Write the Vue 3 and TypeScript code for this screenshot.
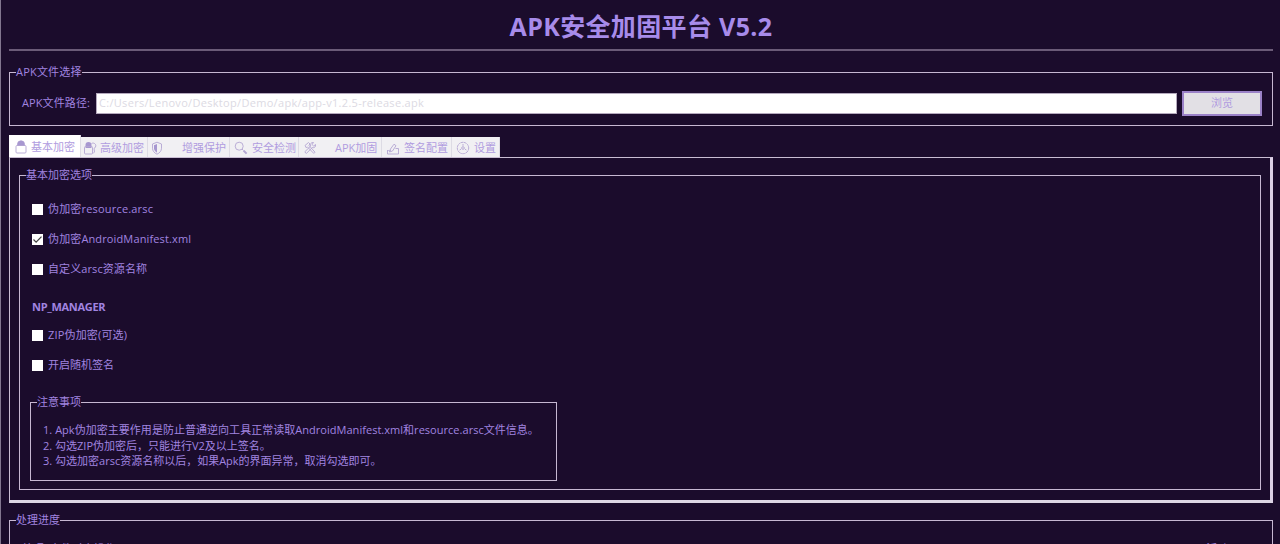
<script setup lang="ts">
import { ref } from 'vue'

interface Option {
  label: string
  checked: boolean
  width: number
}
interface Tab {
  label: string
  icon: string
  width: number
  gap: number
}

const tabs: Tab[] = [
  { label: '基本加密', icon: 'lock', width: 72, gap: 3 },
  { label: '高级加密', icon: 'keylock', width: 67, gap: 3 },
  { label: '增强保护', icon: 'shield', width: 82, gap: 17 },
  { label: '安全检测', icon: 'search', width: 69, gap: 4 },
  { label: 'APK加固', icon: 'tools', width: 83, gap: 18 },
  { label: '签名配置', icon: 'sign', width: 70, gap: 4 },
  { label: '设置', icon: 'gear', width: 48, gap: 4 },
]
const active = ref(0)
const path = ref('C:/Users/Lenovo/Desktop/Demo/apk/app-v1.2.5-release.apk')
const basic = ref<Option[]>([
  { label: '伪加密resource.arsc', checked: false, width: 105 },
  { label: '伪加密AndroidManifest.xml', checked: true, width: 143 },
  { label: '自定义arsc资源名称', checked: false, width: 99 },
])
const manager = ref<Option[]>([
  { label: 'ZIP伪加密(可选)', checked: false, width: 79 },
  { label: '开启随机签名', checked: false, width: 66 },
])
const notes = [
  '1. Apk伪加密主要作用是防止普通逆向工具正常读取AndroidManifest.xml和resource.arsc文件信息。',
  '2. 勾选ZIP伪加密后，只能进行V2及以上签名。',
  '3. 勾选加密arsc资源名称以后，如果Apk的界面异常，取消勾选即可。',
]
</script>

<template>
  <main class="window">
    <h1>APK安全加固平台 V5.2</h1>
    <section class="group file">
      <div class="legend wide">APK文件选择</div>
      <div class="file-row">
        <label for="apk">APK文件路径:</label>
        <input id="apk" v-model="path" type="text" />
        <button type="button">浏览</button>
      </div>
    </section>

    <nav class="tabs">
      <div
        v-for="(t, i) in tabs"
        :key="t.label"
        class="tab"
        :class="{ active: i === active }"
        :style="{ width: t.width + 'px' }"
        @click="active = i"
      >
        <svg viewBox="0 0 14 14" :style="{ marginRight: t.gap + 'px' }">
          <template v-if="t.icon === 'lock'">
            <path d="M3.500 5.500V4.300a3.500 3.500 0 0 1 7 0v1.200" />
            <path class="solid" d="M3.500 6V4.300a3.500 3.500 0 0 1 7 0V6z" />
            <rect x="2" y="5.500" width="10" height="7.500" rx="1" />
          </template>
          <template v-else-if="t.icon === 'keylock'">
            <path d="M8.500 2.500c2-1.200 4.500.3 4.300 2.500-.1 1.200-.8 2-1.800 2.400l.5 3.600-1.500 1.500" />
            <path class="solid" d="M2.500 7V4a3 3 0 0 1 6 0v3z" />
            <rect x="1.500" y="5.500" width="8" height="7.500" rx="1" />
          </template>
          <template v-else-if="t.icon === 'shield'">
            <path d="M7 1.200 11.500 3v4.200c0 2.700-1.800 4.800-4.500 6-2.700-1.200-4.500-3.300-4.500-6V3z" />
            <path class="solid" d="M7 3 4 4.300v3C4 9.200 5.200 10.800 7 11.700z" />
          </template>
          <template v-else-if="t.icon === 'search'">
            <circle cx="5.200" cy="5.200" r="4" />
            <path d="m8 8 1.500 1.500" />
            <path class="thick" d="m9.600 9.600 3 3" />
          </template>
          <template v-else-if="t.icon === 'tools'">
            <path d="M2 4.500 5.500 1.500 7 3 5.800 4.200l6.200 7-1.200 1.200-6.500-6.600-1 1zM12.500 3.500 10.700 5 9 3.500l1.500-2C8 1.200 7 3 7.700 5L1.800 10.800l1.500 1.700 6-6c2 .8 3.700-.8 3.200-3z" />
          </template>
          <template v-else-if="t.icon === 'sign'">
            <path d="M1.500 9v4h11V7.500H9.500M1.500 10c1.500-1.200 2 .6 3.500-.5M3.500 11l1-3L8 3.200l2 1.500L6.500 10z" />
          </template>
          <template v-else>
            <circle cx="7" cy="7" r="5.700" stroke-dasharray="2.600 .4" />
            <circle cx="7" cy="7" r="1.300" />
            <path d="M7 3v1.800M3.600 9l1.500-.9M10.400 9l-1.500-.9" />
          </template>
        </svg>
        <span>{{ t.label }}</span>
      </div>
    </nav>

    <section class="panel">
      <div class="group options">
        <div class="legend">基本加密选项</div>
        <label v-for="o in basic" :key="o.label" class="option">
          <input v-model="o.checked" type="checkbox" />
          <span class="box"><svg v-if="o.checked" viewBox="0 0 11 11"><path d="m1.500 5.500 2.600 2.600 5.400-5.500" /></svg></span>
          <svg class="line" :width="o.width + 4" height="18"><text x="0" y="13" :textLength="o.width">{{ o.label }}</text></svg>
        </label>
        <h2>NP_MANAGER</h2>
        <label v-for="o in manager" :key="o.label" class="option">
          <input v-model="o.checked" type="checkbox" />
          <span class="box"><svg v-if="o.checked" viewBox="0 0 11 11"><path d="m1.500 5.500 2.600 2.600 5.400-5.500" /></svg></span>
          <svg class="line" :width="o.width + 4" height="18"><text x="0" y="13" :textLength="o.width">{{ o.label }}</text></svg>
        </label>
        <div class="group notes">
          <div class="legend">注意事项</div>
          <p v-for="n in notes" :key="n">{{ n }}</p>
        </div>
      </div>
    </section>

    <section class="group progress">
      <div class="legend">处理进度</div>
      <div class="status"><span>处理: 文件对齐操作</span><span>活动...</span></div>
    </section>
  </main>
</template>

<style>
html,
body {
  background: #1b0c2c;
  overflow: hidden;
}
</style>

<style scoped>
* {
  box-sizing: border-box;
}
.window {
  height: 544px;
  overflow: hidden;
  padding: 0 7px 0 8px;
  border-left: 1px solid #82768f;
  background: #1b0c2c;
  color: #a184e0;
  font: 11px/16px 'Open Sans', 'Noto Sans CJK SC', sans-serif;
  white-space: nowrap;
}
h1 {
  height: 51px;
  margin: 0 0 21px;
  padding-top: 1px;
  border-bottom: 2px solid #6b5b78;
  color: #a78bea;
  font-size: 25px;
  font-weight: 700;
  line-height: 50px;
  letter-spacing: 0.35px;
  text-align: center;
}
.group {
  border: 1px solid #c6b8d2;
}
.legend {
  width: fit-content;
  height: 16px;
  margin: -9px 0 0 6px;
  background: #1b0c2c;
}
.wide {
  letter-spacing: 0.2px;
}
.file {
  height: 54px;
}
.file-row {
  display: flex;
  align-items: center;
  height: 24px;
  margin: 11px 10px 0 12px;
}
.file-row label {
  width: 74px;
  letter-spacing: 0.1px;
}
.file-row input {
  flex: 1;
  height: 21px;
  min-width: 0;
  padding: 0 2px 1px;
  border: 1px solid #b4a9bd;
  border-radius: 0;
  outline: 0;
  background: #fff;
  color: #dcdae3;
  font: inherit;
  letter-spacing: 0.31px;
}
.file-row button {
  width: 80px;
  height: 25px;
  margin-left: 5px;
  padding: 0;
  border: 2px solid #9b82c8;
  border-radius: 0;
  background: #e2e0e5;
  color: #b09be0;
  font: inherit;
}
.tabs {
  display: flex;
  align-items: flex-end;
  height: 31px;
}
.tab {
  display: flex;
  align-items: center;
  height: 20px;
  padding: 2px 0 0 3px;
  border-right: 1px solid #dddbe4;
  background: #f1f0f3;
  color: #b09ce0;
}
.tab:nth-child(2),
.tab:nth-child(3) {
  padding-left: 2px;
}
.tab:nth-child(3) span {
  margin-left: 1px;
}
.tab:nth-child(n + 4) {
  padding-left: 4px;
}
.tab.active {
  height: 22px;
  padding: 1px 0 0 5px;
  background: #fff;
}
.tab svg {
  flex: none;
  width: 14px;
  height: 14px;
  fill: none;
  stroke: #b3a5d2;
  stroke-width: 0.9;
}
.tab .solid {
  fill: #a797d0;
  stroke: none;
}
.tab .thick {
  stroke-width: 2;
}
.panel {
  height: 346px;
  padding: 17px 9px 0;
  border: 1px solid #c9bdd3;
  border-right: 3px solid #ddd1e7;
  border-bottom: 3px solid #ddd6e4;
}
.options {
  height: 315px;
  padding: 0 10px;
}
.options > .legend {
  margin-left: -4px;
}
.option {
  display: flex;
  align-items: center;
  height: 30px;
  padding-left: 2px;
}
.legend + .option {
  margin-top: 11px;
}
.option input {
  display: none;
}
.box {
  width: 11px;
  height: 11px;
  margin-right: 5px;
  background: #fff;
}
.box svg {
  display: block;
  fill: none;
  stroke: #444;
  stroke-width: 1.3;
}
.line {
  overflow: visible;
  fill: #a184e0;
}
h2 {
  height: 16px;
  margin: 15px 0 5px 2px;
  font: 700 11px/16px 'Open Sans', sans-serif;
  letter-spacing: -0.3px;
}
.notes {
  width: 527px;
  height: 79px;
  margin-top: 22px;
}
.notes .legend + p {
  margin-top: 12px;
  letter-spacing: 0.03px;
}
.notes p {
  height: 16px;
  margin: 0 0 0 12px;
}
.notes p:last-child {
  margin-top: -1px;
}
.progress {
  height: 80px;
  margin-top: 17px;
}
.status {
  display: flex;
  justify-content: space-between;
  margin: 13px 35px 0 12px;
}
</style>
